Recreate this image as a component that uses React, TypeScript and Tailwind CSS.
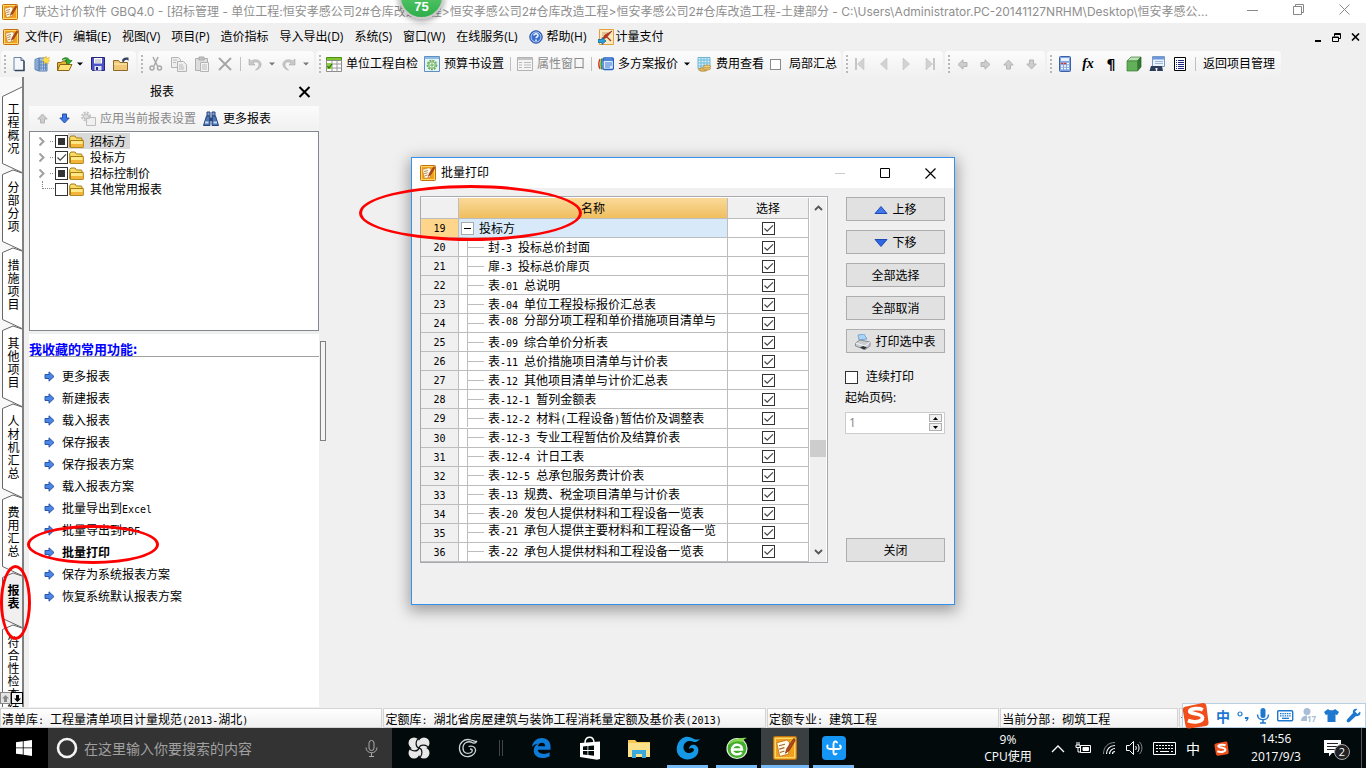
import { useState } from 'react';
import type { ReactNode } from 'react';

const UI_FONT = "[font-family:'Open_Sans','Noto_Sans_CJK_SC',sans-serif]";
const SONG_FONT = "[font-family:'Noto_Sans_CJK_SC',sans-serif]";

interface ReportRow {
  no: number;
  name: string;
  wrapped?: boolean;
}

const reportRows: ReportRow[] = [
  { no: 20, name: '封-3 投标总价封面' },
  { no: 21, name: '扉-3 投标总价扉页' },
  { no: 22, name: '表-01 总说明' },
  { no: 23, name: '表-04 单位工程投标报价汇总表' },
  { no: 24, name: '表-08 分部分项工程和单价措施项目清单与', wrapped: true },
  { no: 25, name: '表-09 综合单价分析表' },
  { no: 26, name: '表-11 总价措施项目清单与计价表' },
  { no: 27, name: '表-12 其他项目清单与计价汇总表' },
  { no: 28, name: '表-12-1 暂列金额表' },
  { no: 29, name: '表-12-2 材料(工程设备)暂估价及调整表' },
  { no: 30, name: '表-12-3 专业工程暂估价及结算价表' },
  { no: 31, name: '表-12-4 计日工表' },
  { no: 32, name: '表-12-5 总承包服务费计价表' },
  { no: 33, name: '表-13 规费、税金项目清单与计价表' },
  { no: 34, name: '表-20 发包人提供材料和工程设备一览表' },
  { no: 35, name: '表-21 承包人提供主要材料和工程设备一览', wrapped: true },
  { no: 36, name: '表-22 承包人提供材料和工程设备一览表' },
];

const favorites = [
  '更多报表',
  '新建报表',
  '载入报表',
  '保存报表',
  '保存报表方案',
  '载入报表方案',
  '批量导出到Excel',
  '批量导出到PDF',
  '批量打印',
  '保存为系统报表方案',
  '恢复系统默认报表方案',
];

const sideTabs = ['工程概况', '分部分项', '措施项目', '其他项目', '人材机汇总', '费用汇总', '报表', '符合性检查结果'];

const menus = ['文件(F)', '编辑(E)', '视图(V)', '项目(P)', '造价指标', '导入导出(D)', '系统(S)', '窗口(W)', '在线服务(L)'];

// Chinese at 12px with the latin runs in a half-width monospace
const Song = ({ text }: { text: string }) => (
  <span className={`${SONG_FONT} text-[12px] whitespace-pre`}>
    {text.split(/([\x20-\x7e]+)/).map((part, i) =>
      i % 2 ? (
        <span key={i} className="text-[10px] [font-family:'DejaVu_Sans_Mono',monospace]">{part}</span>
      ) : (
        part
      )
    )}
  </span>
);

/* ---------- icons ---------- */

const AppIcon = ({ size = 16 }: { size?: number }) => (
  <svg width={size} height={size} viewBox="0 0 16 16" className="shrink-0">
    <rect x=".5" y=".5" width="15" height="15" rx="1" fill="#f0a01c" stroke="#c4700a" />
    <rect x="1.5" y="1.5" width="13" height="13" fill="none" stroke="#ffd968" />
    <path d="M2.500 4.500 9 2.800l2 1.200-.6 8L4.500 13.600z" fill="#fffbe8" stroke="#b5651d" strokeWidth=".5" />
    <path d="M4 6.500l4-1M4.200 8.700l3.400-1M4.600 11l3-1" stroke="#a4672c" strokeWidth=".8" />
    <path d="M14 1.500 9.300 8.300l-1 3.200 2.600-2L14.800 3z" fill="#b5481c" stroke="#7a2c0c" strokeWidth=".5" />
  </svg>
);

const Caret = ({ dim }: { dim?: boolean }) => (
  <svg width="6" height="4" viewBox="0 0 6 4" className="shrink-0">
    <path d="M0 .5h6L3 3.5z" fill={dim ? '#777' : '#000'} />
  </svg>
);

const Icon = ({ children }: { children: ReactNode }) => (
  <svg width="16" height="16" viewBox="0 0 16 16" fill="none" className="shrink-0">{children}</svg>
);

const NewFile = () => (
  <Icon>
    <path d="M3 1.500h7l3 3v10H3z" fill="#f4f8fc" stroke="#6d83a3" />
    <path d="M10 1.500v3h3" stroke="#4a5f7c" />
    <path d="M13 5v9.500H4" stroke="#33455e" strokeWidth="1.400" />
  </Icon>
);

const NewProject = () => (
  <Icon>
    <path d="M1 3.500l4-1.500v13l-4-1.500zM5 2h8v13H5z" fill="#a9c9ee" stroke="#5a7fb0" />
    <path d="M7 4v10M9.500 4v10M11.500 6v8M5 6h8M5 9h8M5 12h8M3 4v10" stroke="#4f74a8" strokeWidth=".7" />
    <path d="M12 0l1 2.400L15.600 1l-1 2.400L16 5l-2 .6.4 2.400L12 6.600 9.800 8l.6-2.600L8 4.600l2-1.200L9.400 1l2 1z" fill="#ffe14a" stroke="#e0a61a" strokeWidth=".4" />
  </Icon>
);

const OpenIcon = () => (
  <Icon>
    <path d="M.5 14.500v-8h4l1-1.500h4v3" fill="#e3b534" stroke="#8a6410" />
    <path d="M.5 14.500 3 8.500h12l-3 6z" fill="#ffe27a" stroke="#8a6410" />
    <path d="M5 3.500C8 .5 12 1.500 12.500 4.500H15l-3.600 4-3.400-4h2C9.500 3 7.500 2.500 5 3.500z" fill="#2fae2b" stroke="#12700f" strokeWidth=".7" />
  </Icon>
);

const SaveIcon = () => (
  <Icon>
    <path d="M1.500 1.500h13v13h-12l-1-1z" fill="#4b52c4" stroke="#23277c" />
    <path d="M4 2h8v5.500H4z" fill="#fff" />
    <path d="M5 4h6M5 6h6" stroke="#a9a9b4" />
    <path d="M4.500 10h7v4.500h-7z" fill="#dfe2f2" />
    <path d="M6 11h2v3H6z" fill="#23277c" />
  </Icon>
);

const FolderOut = () => (
  <Icon>
    <path d="M.5 14.500v-10h5l1.500 2h7.500v8z" fill="#f0c878" stroke="#8a6a28" />
    <path d="M1 8h13" stroke="#fff0b8" />
    <path d="M9 5.500c0-3 2-4 4-4h2.500v3.500l-1.300-1.300C12 3.500 11 4.500 11 6z" fill="#31415e" />
  </Icon>
);

const Folder = () => (
  <svg width="15" height="13" viewBox="0 0 15 13" fill="none" className="shrink-0">
    <path d="M.7 12V2.500L2 1h4l1.500 2h5L13 4v8z" fill="#f8dc6a" stroke="#a87a0c" />
    <path d="M1.500 12.300V5.500h12.800v6.800z" fill="#ffe987" stroke="#a87a0c" />
    <path d="M2 9h12v3H2z" fill="#f3b43a" />
  </svg>
);

const CutIcon = () => (
  <Icon>
    <path d="M5 1l4.500 9M10 1 6 10" stroke="#a8a8a8" strokeWidth="1.500" />
    <circle cx="4" cy="12" r="2" stroke="#a8a8a8" strokeWidth="1.500" />
    <circle cx="11.500" cy="12" r="2" stroke="#a8a8a8" strokeWidth="1.500" />
  </Icon>
);

const CopyIcon = () => (
  <Icon>
    <path d="M.5 1.500h7l2 2v8h-9z" fill="#eee" stroke="#b4b4b4" />
    <path d="M6.500 5.500h6l3 3v7h-9z" fill="#eee" stroke="#b4b4b4" />
    <path d="M2 4h4M2 6.500h3M8 9h4M8 11h5M8 13h5" stroke="#bbb" />
  </Icon>
);

const PasteIcon = () => (
  <Icon>
    <path d="M1.500 2.500h12v12h-12z" fill="#ddd" stroke="#b0b0b0" />
    <path d="M5 1h5v3H5z" fill="#c4c4c4" stroke="#aaa" />
    <path d="M6.500 6.500h8v9h-8z" fill="#f2f2f2" stroke="#b4b4b4" />
    <path d="M8 9h5M8 11h5M8 13h5" stroke="#bbb" />
  </Icon>
);

const DeleteIcon = () => (
  <Icon>
    <path d="M2 2l12 12M14 2 2 14" stroke="#a4a4a4" strokeWidth="1.800" />
  </Icon>
);

const UndoIcon = ({ flip }: { flip?: boolean }) => (
  <svg width="14" height="14" viewBox="0 0 14 14" fill="none" className={flip ? 'shrink-0 -scale-x-100' : 'shrink-0'}>
    <path d="M1 2v6h6L5 6c3-2 6-1 6 1.500S9 12 7.500 13C12 12 13.500 9 13 6.500 12.500 3 7 1.500 3.200 4z" fill="#c9c9c9" stroke="#aaa" strokeWidth=".6" />
  </svg>
);

const CheckTable = () => (
  <Icon>
    <path d="M.5 1.500h15v3H.5z" fill="#7fc52e" stroke="#4e8f12" />
    <path d="M.5 4.500h15v11H.5z" fill="#fff" stroke="#8c8c8c" />
    <path d="M.5 8h15M.5 12h15M6 4.500v11M11 4.500v11" stroke="#999" />
    <path d="M1 7h5v6H1z" fill="#8ed13f" />
    <path d="M1.500 10l1.500 2 3-4" stroke="#276b0b" strokeWidth="1.200" />
  </Icon>
);

const BudgetIcon = () => (
  <Icon>
    <path d="M.5 .5h15v15H.5z" fill="#e6f1fb" stroke="#5d8fbf" />
    <path d="M1 1h14v2H1z" fill="#8fbbe4" />
    <circle cx="8" cy="9" r="4.500" stroke="#5fae4d" strokeWidth="1.600" strokeDasharray="2 1" />
    <circle cx="8" cy="9" r="3.300" fill="#fff" stroke="#5fae4d" />
    <path d="M8 6.500v5M5.500 9h5" stroke="#5fae4d" />
  </Icon>
);

const PropsIcon = () => (
  <Icon>
    <path d="M.5 1.500h15v13H.5z" fill="#f4f4f4" stroke="#b3b3b3" />
    <path d="M1 3h14" stroke="#c4c4c4" strokeWidth="2" />
    <path d="M2 6.500h3M2 9h3M2 11.500h3M7 6.500h7M7 9h7M7 11.500h7" stroke="#bbb" />
  </Icon>
);

const PlansIcon = () => (
  <Icon>
    <path d="M2 3C.6 6 .6 10 2 13" stroke="#d8341f" strokeWidth="1.500" />
    <path d="M4 2.500C2.800 6 2.800 10 4 13.500" stroke="#2f9d2f" strokeWidth="1.500" />
    <rect x="5" y="2" width="10.500" height="11.500" rx="1.500" fill="#dcebff" stroke="#2463c5" strokeWidth="1.300" />
    <path d="M5 4h10" stroke="#2463c5" strokeWidth="1.500" />
    <path d="M7 7h7M7 9h7M7 11h5" stroke="#3c77cf" />
  </Icon>
);

const FeeIcon = () => (
  <Icon>
    <path d="M2 1.500h12v11H2z" fill="#d6f0fb" stroke="#6fb3cd" />
    <path d="M2 4h12M2 7h12M2 10h12M5 1.500v11M8 1.500v11M11 1.500v11" stroke="#6fb9d8" />
    <ellipse cx="7" cy="13.500" rx="4.500" ry="1.800" fill="#e0b45c" stroke="#a37a2a" strokeWidth=".6" />
    <ellipse cx="11" cy="12.500" rx="3.600" ry="1.500" fill="#efca7c" stroke="#a37a2a" strokeWidth=".6" />
    <ellipse cx="11" cy="10.500" rx="3.600" ry="1.500" fill="#efca7c" stroke="#a37a2a" strokeWidth=".6" />
  </Icon>
);

const NavArrow = ({ bar, flip }: { bar?: boolean; flip?: boolean }) => (
  <svg width="11" height="12" viewBox="0 0 11 12" className={flip ? 'shrink-0 -scale-x-100' : 'shrink-0'}>
    <path d="M9 0v12L2.500 6z" fill="#d2d2d2" stroke="#bcbcbc" strokeWidth=".5" />
    {bar && <path d="M0 0h2v12H0z" fill="#c6c6c6" />}
  </svg>
);

// turn is one of the tailwind rotate classes
const BlockArrow = ({ fill = '#cdcdcd', edge = '#b4b4b4', turn = '' }: { fill?: string; edge?: string; turn?: string }) => (
  <svg width="11" height="11" viewBox="0 0 11 11" className={`shrink-0 ${turn}`}>
    <path d="M1 3.500h4V.8l5 4.700-5 4.700V7.500H1z" fill={fill} stroke={edge} />
  </svg>
);

const CalcIcon = () => (
  <Icon>
    <rect x="2.500" y=".5" width="11" height="15" rx="1" fill="#7fa6e0" stroke="#3a5fa4" />
    <path d="M4 2h8v3H4z" fill="#e6f0ff" />
    <path d="M4 7.500h8M4 10h8M4 12.500h8" stroke="#fff" strokeWidth="1.600" strokeDasharray="2 1" />
    <path d="M4 7.500h2M7 7.500h2" stroke="#d8341f" strokeWidth="1.600" />
  </Icon>
);

const CubeIcon = () => (
  <Icon>
    <path d="M1 5l4-4h10l-3.500 4z" fill="#b9e0b4" stroke="#3d7c36" strokeWidth=".7" />
    <path d="M11.500 5 15 1v10l-3.500 4z" fill="#2f7a2c" stroke="#245f20" strokeWidth=".7" />
    <path d="M1 5h10.500v10H1z" fill="#62b058" stroke="#3d7c36" strokeWidth=".7" />
  </Icon>
);

const FindWindow = () => (
  <Icon>
    <path d="M3.500 .5h12v10h-12z" fill="#e9f2fd" stroke="#7b98c4" />
    <path d="M4 1h11v2.500H4z" fill="#6c99dd" />
    <path d="M6 5.500h8M6 7.500h8" stroke="#9fb7d8" />
    <path d="M2 10h4l1 5H.5zM9 10h4l1 5H8z" fill="#2d3d59" />
    <path d="M5 11h5" stroke="#2d3d59" strokeWidth="2" />
  </Icon>
);

const ListIcon = () => (
  <Icon>
    <path d="M2.500 1.500h11v13h-11z" fill="#fff" stroke="#000" />
    <path d="M4 4.500h1M6 4.500h6M4 6.500h1M6 6.500h6M4 8.500h1M6 8.500h6M4 10.500h1M6 10.500h6M4 12.500h1M6 12.500h6" stroke="#1a237e" />
  </Icon>
);

const Binoculars = () => (
  <Icon>
    <path d="M4 1h3v4H4zM9 1h3v4H9z" fill="#7f9fd2" stroke="#27457d" />
    <path d="M3.500 5h3.500v9.500H.5zM9 5h3.500l3 9.500H9z" fill="#4d74b3" stroke="#27457d" />
    <path d="M6.500 6.500h3v3.500h-3z" fill="#27457d" />
    <path d="M2 11.500h3.500M10.500 11.500H14" stroke="#c9dcf7" strokeWidth="2" />
  </Icon>
);

const ApplyIcon = () => (
  <Icon>
    <circle cx="6" cy="5.500" r="4" stroke="#c4c4c4" strokeWidth="2" strokeDasharray="2 1.200" />
    <circle cx="6" cy="5.500" r="2.500" fill="#ddd" stroke="#bbb" />
    <path d="M6.500 7.500h3l1-1h5v8h-9z" fill="#f0f0f0" stroke="#bdbdbd" />
  </Icon>
);

const HelpIcon = () => (
  <svg width="14" height="14" viewBox="0 0 14 14" fill="none" className="shrink-0">
    <circle cx="7" cy="7" r="6.200" fill="#3a6fd0" stroke="#1c469c" />
    <circle cx="7" cy="7" r="5" stroke="#dbe7fb" strokeWidth=".8" />
    <path d="M5 5.500C5 3.200 9.200 3.200 9 5.600c-.1 1.200-2 1.300-2 2.600M7 9.500V11" stroke="#fff" strokeWidth="1.400" />
  </svg>
);

const PayIcon = () => (
  <Icon>
    <path d="M1.500 .5h14v15h-14z" fill="#fce9c4" stroke="#e2a13a" />
    <path d="M4 4h6M4 6h4" stroke="#c9a06a" />
    <path d="M14 2 8 9l-4 1 3-4z" fill="#c8321c" stroke="#7f1c0c" strokeWidth=".6" />
    <path d="M9 8l4 4" stroke="#a5401c" strokeWidth="1.500" />
    <path d="M0 10.500h4V8.500l4 3.500-4 3.500v-2H0z" fill="#2aa0dc" stroke="#11608f" strokeWidth=".7" />
  </Icon>
);

const PrinterIcon = () => (
  <Icon>
    <path d="M4 6 3 1l6-1 3 5z" fill="#a9d3f7" stroke="#5f93c6" strokeWidth=".7" />
    <path d="M.5 9 5 6l10 2v4l-5 3.500L.5 12z" fill="#c9ccd0" stroke="#75797e" strokeWidth=".8" />
    <path d="M.5 9l9.500 3 5-4" stroke="#f4f4f4" />
    <path d="M5 13.500l3-1.500 4 1.500-3 2z" fill="#2f3338" />
  </Icon>
);

const SogouIcon = ({ size }: { size: number }) => (
  <svg width={size} height={size} viewBox="0 0 26 26" fill="none" className="shrink-0">
    <path d="M3 4.500 20 1q3-.5 3.500 2.500l2 16q.3 3-2.500 3.500L7 25.500q-3 .3-3.600-2.500L.8 8q-.4-3 2.200-3.500z" fill="#f04e1b" />
    <path d="M20 7.500c-3-1.700-12-1.500-12.500 1.300C7 12 19.500 10.500 19.700 15c.2 4.300-9 5-14 2.800" stroke="#fff" strokeWidth="3.600" />
  </svg>
);

/* ---------- small controls ---------- */

const CheckBox = ({ label, checked = false, partial = false }: { label: string; checked?: boolean; partial?: boolean }) => {
  const [on, setOn] = useState(checked);
  return (
    <span className="relative block h-[13px] w-[13px] shrink-0">
      <input
        type="checkbox"
        aria-label={label}
        checked={on}
        onChange={() => setOn(!on)}
        className="block h-[13px] w-[13px] appearance-none border border-[#333] bg-white"
      />
      {partial ? (
        <span className="pointer-events-none absolute inset-[3px] bg-[#333]" />
      ) : (
        on && (
          <svg viewBox="0 0 13 13" fill="none" className="pointer-events-none absolute inset-0">
            <path d="M2.500 6.500 5.200 9.200 11 3.400" stroke="#444" strokeWidth="1.200" />
          </svg>
        )
      )}
    </span>
  );
};

const Grip = () => (
  <span className="flex shrink-0 flex-col gap-[2px] px-[3px]">
    {[0, 1, 2, 3, 4].map((i) => (
      <span key={i} className="block h-[2px] w-[2px] bg-[#b8b8b8]" />
    ))}
  </span>
);

const Divider = () => <span className="h-[14px] w-px shrink-0 bg-[#c0c0c0]" />;

const ToolGroup = ({ className, children }: { className: string; children: ReactNode }) => (
  <div className={`flex h-[26px] shrink-0 items-center rounded-sm bg-linear-to-b from-[#fcfcfc] to-[#f0f0f0] ${className}`}>
    <Grip />
    {children}
  </div>
);

const Tool = ({ icon, label, text, dim }: { icon?: ReactNode; label?: string; text?: string; dim?: boolean }) => (
  <button
    type="button"
    aria-label={label}
    className={`flex shrink-0 items-center gap-1 whitespace-nowrap ${dim ? 'text-[#8a8a8a]' : 'text-black'}`}
  >
    {icon}
    {text}
  </button>
);

/* ---------- window parts ---------- */

const TitleBar = () => (
  <header className="flex h-[23px] shrink-0 items-center bg-white pr-3 pl-[2px] text-[#8f8f8f]">
    <AppIcon />
    <h1 className="ml-[5px] flex-1 truncate text-[12px] leading-[20px] [font-family:Inter,'Noto_Sans_CJK_SC',sans-serif]">
      广联达计价软件 GBQ4.0 - [招标管理 - 单位工程:恒安孝感公司2#仓库改造工程&gt;恒安孝感公司2#仓库改造工程&gt;恒安孝感公司2#仓库改造工程-土建部分 - C:\Users\Administrator.PC-20141127NRHM\Desktop\恒安孝感公...
    </h1>
    <div className="flex shrink-0 items-center gap-[35px] pr-1 pb-1">
      <button type="button" aria-label="最小化">
        <svg width="11" height="11" viewBox="0 0 11 11"><path d="M0 6.500h11" stroke="#888" /></svg>
      </button>
      <button type="button" aria-label="还原">
        <svg width="11" height="11" viewBox="0 0 11 11" fill="none" stroke="#888"><path d="M.5 2.500h8v8h-8zM2.500 2.500v-2h8v8h-2" /></svg>
      </button>
      <button type="button" aria-label="关闭窗口">
        <svg width="11" height="11" viewBox="0 0 11 11" stroke="#888"><path d="M.5 .5l10 10M10.500 .5l-10 10" /></svg>
      </button>
    </div>
  </header>
);

const MenuBar = () => (
  <nav className="flex h-[28px] shrink-0 items-center pr-[6px] pl-[3px] text-[12px] whitespace-nowrap">
    <AppIcon />
    <div className="ml-[6px] flex items-center gap-[11px]">
      {menus.map((m) => (
        <button key={m} type="button">{m}</button>
      ))}
      <button type="button" className="flex items-center gap-1"><HelpIcon />帮助(H)</button>
      <button type="button" className="flex items-center gap-[2px]"><PayIcon />计量支付</button>
    </div>
    <div className="ml-auto flex items-center gap-[10px]">
      <button type="button" aria-label="最小化文档">
        <svg width="8" height="9" viewBox="0 0 8 9"><path d="M1 7h6v2H1z" /></svg>
      </button>
      <button type="button" aria-label="还原文档">
        <svg width="9" height="9" viewBox="0 0 9 9" fill="none" stroke="#000"><path d="M.5 4h6v4.500h-6zM.5 4.500h6M2.500 3.500v-3h6v5h-2M2.500 1.500h6" /></svg>
      </button>
      <button type="button" aria-label="关闭文档">
        <svg width="9" height="8" viewBox="0 0 9 8" stroke="#000" strokeWidth="1.600"><path d="M1 .5l7 7M8 .5l-7 7" /></svg>
      </button>
    </div>
  </nav>
);

const ToolBar = () => (
  <div className="flex h-[26px] shrink-0 gap-[2px] overflow-hidden pl-px text-[12px]">
    <ToolGroup className="w-[135px]">
      <div className="ml-[2px] flex items-center gap-[7px]">
        <Tool label="新建" icon={<NewFile />} />
        <Tool label="新建项目" icon={<NewProject />} />
        <Tool label="打开" icon={<><OpenIcon /><Caret /></>} />
        <Tool label="保存" icon={<SaveIcon />} />
        <Tool label="关闭项目" icon={<FolderOut />} />
      </div>
    </ToolGroup>
    <ToolGroup className="w-[176px]">
      <div className="ml-[2px] flex items-center gap-[7px]">
        <Tool label="剪切" icon={<CutIcon />} />
        <Tool label="复制" icon={<CopyIcon />} />
        <Tool label="粘贴" icon={<PasteIcon />} />
        <Tool label="删除" icon={<DeleteIcon />} />
        <Divider />
        <Tool label="撤销" icon={<UndoIcon />} />
        <Caret dim />
        <Tool label="重做" icon={<UndoIcon flip />} />
        <Caret dim />
      </div>
    </ToolGroup>
    <ToolGroup className="w-[525px]">
      <div className="ml-[2px] flex items-center gap-[6px]">
        <Tool icon={<CheckTable />} text="单位工程自检" />
        <Tool icon={<BudgetIcon />} text="预算书设置" />
        <Divider />
        <Tool icon={<PropsIcon />} text="属性窗口" dim />
        <Divider />
        <Tool icon={<PlansIcon />} text="多方案报价" />
        <Caret />
        <Tool icon={<FeeIcon />} text="费用查看" />
        <label className="flex shrink-0 items-center gap-2 whitespace-nowrap">
          <input type="checkbox" className="h-[11px] w-[11px] appearance-none border border-[#8a8a8a] bg-white" />
          局部汇总
        </label>
      </div>
    </ToolGroup>
    <ToolGroup className="w-[100px]">
      <div className="ml-1 flex items-center gap-3">
        <Tool label="第一条" icon={<NavArrow bar />} />
        <Tool label="上一条" icon={<NavArrow />} />
        <Tool label="下一条" icon={<NavArrow flip />} />
        <Tool label="最后一条" icon={<NavArrow bar flip />} />
      </div>
    </ToolGroup>
    <ToolGroup className="w-[100px]">
      <div className="ml-1 flex items-center gap-3">
        <Tool label="左移" icon={<BlockArrow turn="rotate-180" />} />
        <Tool label="右移" icon={<BlockArrow />} />
        <Tool label="上移一行" icon={<BlockArrow turn="-rotate-90" />} />
        <Tool label="下移一行" icon={<BlockArrow turn="rotate-90" />} />
      </div>
    </ToolGroup>
    <ToolGroup className="w-[234px]">
      <div className="ml-[2px] flex items-center gap-[7px]">
        <Tool label="计算器" icon={<CalcIcon />} />
        <button type="button" className="w-4 text-[14px] leading-4 font-bold italic [font-family:'Liberation_Serif',serif]">fx</button>
        <button type="button" className="w-4 text-[14px] leading-4 font-bold [font-family:'DejaVu_Sans',sans-serif]">¶</button>
        <Tool label="图元" icon={<CubeIcon />} />
        <Tool label="查找" icon={<FindWindow />} />
        <Tool label="列表" icon={<ListIcon />} />
        <Divider />
        <Tool text="返回项目管理" />
      </div>
    </ToolGroup>
  </div>
);

const SideTabs = () => (
  <div className="flex w-6 shrink-0 flex-col overflow-hidden border-r-2 border-[#808080] bg-[#f8f8f8] pt-[19px]" role="tablist">
    {sideTabs.map((tab) => {
      const h = tab.length * 13 + 26;
      const active = tab === '报表';
      const top = tab === '工程概况' ? 'M22 -9' : 'M22 -1 L13 -4';
      return (
        <button
          key={tab}
          type="button"
          role="tab"
          aria-selected={active}
          className="relative flex shrink-0 justify-center pt-[6px] pb-5 pl-[5px]"
        >
          <svg width="22" height={h} viewBox={`0 0 22 ${h}`} className="absolute top-0 left-0 overflow-visible">
            <path
              d={`${top} L2.500 .5 V${h - 10.5} L22 ${h - 1.5}`}
              fill={active ? '#f0f0f0' : '#fff'}
              stroke="#666"
            />
          </svg>
          <span className={`relative w-[13px] text-[12px] leading-[13px] break-all ${SONG_FONT} ${active ? 'font-bold' : ''}`}>{tab}</span>
        </button>
      );
    })}
  </div>
);

const TreeRow = ({ text, state, selected, leaf }: { text: string; state: 'on' | 'off' | 'partial'; selected?: boolean; leaf?: boolean }) => (
  <li className="flex h-4 items-center pl-2">
    {leaf ? (
      <span className="mr-px mb-2 ml-1 h-2 w-3 border-b border-l border-dotted border-[#888]" />
    ) : (
      <>
        <svg width="7" height="9" viewBox="0 0 7 9" fill="none"><path d="M1.500 .5 5.500 4.500l-4 4" stroke="#a0a0a0" strokeWidth="2" /></svg>
        <span className="mr-[2px] ml-[5px] w-[3px] border-b border-dotted border-[#888]" />
      </>
    )}
    <CheckBox label={text} checked={state === 'on'} partial={state === 'partial'} />
    <span className={`flex h-4 items-center gap-[6px] pr-1 pl-px ${selected ? 'bg-[#d9d9d9]' : ''}`}>
      <Folder />
      <Song text={text} />
    </span>
  </li>
);

const ReportPanel = () => (
  <section className="ml-[5px] flex w-[290px] shrink-0 flex-col">
    <div className="flex h-[29px] items-center justify-between pr-2 pl-[121px]">
      <h2 className="text-[12px]">报表</h2>
      <button type="button" aria-label="关闭报表面板">
        <svg width="13" height="12" viewBox="0 0 13 12" stroke="#000" strokeWidth="2"><path d="M1.500 1l10 10M11.500 1l-10 10" /></svg>
      </button>
    </div>
    <div className="flex h-[25px] items-center bg-linear-to-b from-[#fbfbfb] to-[#f1f1f1] pl-2 text-[12px]">
      <Tool label="上移报表" icon={<BlockArrow turn="-rotate-90" />} />
      <span className="ml-[11px] flex">
        <Tool label="下移报表" icon={<BlockArrow turn="rotate-90" fill="#3f79e6" edge="#2350b0" />} />
      </span>
      <span className="ml-[10px] flex gap-[7px]">
        <Tool icon={<ApplyIcon />} text="应用当前报表设置" dim />
        <Tool icon={<Binoculars />} text="更多报表" />
      </span>
    </div>
    <ul className="h-[200px] border border-[#828790] bg-white pt-px">
      <TreeRow text="招标方" state="partial" selected />
      <TreeRow text="投标方" state="on" />
      <TreeRow text="招标控制价" state="partial" />
      <TreeRow text="其他常用报表" state="off" leaf />
    </ul>
    <div className="mt-[3px] flex-1 bg-white pt-2">
      <h3 className={`border-b border-[#a0a0a0] text-[13px] leading-[14px] font-bold text-[#0000ff] ${SONG_FONT}`}>我收藏的常用功能:</h3>
      <ul className="pt-2">
        {favorites.map((f) => (
          <li key={f} className="flex h-[22px] items-center">
            <a href="#" className={`flex items-center gap-[7px] pl-[15px] ${f === '批量打印' ? 'font-bold' : ''}`}>
              <BlockArrow fill="#4a86e8" edge="#2a55a8" />
              <Song text={f} />
            </a>
          </li>
        ))}
      </ul>
    </div>
  </section>
);

const SideButton = ({ children }: { children: ReactNode }) => (
  <button type="button" className="flex h-6 w-full items-center justify-center gap-1 border border-[#adadad] bg-[#e1e1e1] pt-px text-[12px] leading-4">
    {children}
  </button>
);

const PrintTable = () => (
  <table className={`min-w-0 flex-1 table-fixed border-separate border-spacing-0 text-[12px] leading-4 ${SONG_FONT}`}>
    <colgroup>
      <col className="w-[38px]" />
      <col />
      <col className="w-[81px]" />
    </colgroup>
    <thead>
      <tr className="h-[21px]">
        <th className="border-r border-b border-[#bdbdbd] bg-[#f0f0f0] p-0" aria-label="序号" />
        <th className="border-r border-b border-[#bdbdbd] bg-linear-to-b from-[#fad999] to-[#f0bf5d] p-0 font-normal">名称</th>
        <th className="border-r border-b border-[#bdbdbd] bg-[#f0f0f0] p-0 font-normal">选择</th>
      </tr>
    </thead>
    <tbody>
      <tr className="h-[19px]">
        <th className="border-r border-b border-[#bdbdbd] bg-[#ffd58c] p-0 font-normal"><Song text="19" /></th>
        <td className="border-r border-b border-[#bdbdbd] bg-[#d8eaf9] p-0">
          <div className="flex h-[18px] items-center gap-[5px] pl-[2px]">
            <button type="button" aria-label="折叠投标方" className="flex h-[13px] w-[13px] items-center justify-center border border-[#aaa] bg-white">
              <span className="h-px w-[7px] bg-black" />
            </button>
            投标方
          </div>
        </td>
        <td className="border-r border-b border-[#bdbdbd] bg-white p-0">
          <div className="flex justify-center"><CheckBox label="投标方" checked /></div>
        </td>
      </tr>
      {reportRows.map((row) => (
        <tr key={row.no} className="h-[19px]">
          <th className="border-r border-b border-[#bdbdbd] bg-[#f0f0f0] p-0 font-normal"><Song text={String(row.no)} /></th>
          <td className="border-r border-b border-[#bdbdbd] bg-white p-0">
            <div className="ml-2 flex h-[18px] items-center border-l border-[#bdbdbd]">
              <span className="mr-1 h-px w-4 bg-[#bdbdbd]" />
              <span className={`overflow-hidden leading-4 ${row.wrapped ? 'pb-1' : 'pt-px'}`}><Song text={row.name} /></span>
            </div>
          </td>
          <td className="border-r border-b border-[#bdbdbd] bg-white p-0">
            <div className="flex justify-center"><CheckBox label={row.name} checked /></div>
          </td>
        </tr>
      ))}
    </tbody>
  </table>
);

const PrintDialog = () => (
  <div role="dialog" aria-label="批量打印" className="absolute top-[157px] left-[411px] flex h-[448px] w-[544px] flex-col border border-[#3492ea] bg-[#f0f0f0] shadow-[0_4px_14px_2px_rgba(0,0,0,0.35)]">
    <div className="flex h-[30px] shrink-0 items-center bg-white pr-[18px] pl-2">
      <AppIcon />
      <h2 className="ml-[5px] text-[12px]">批量打印</h2>
      <div className="ml-auto flex items-center gap-[35px]">
        <button type="button" aria-label="最小化对话框"><svg width="10" height="10"><path d="M0 5.500h10" stroke="#ccc" /></svg></button>
        <button type="button" aria-label="最大化对话框"><svg width="10" height="10" fill="none"><path d="M.5 .5h9v9h-9z" stroke="#000" /></svg></button>
        <button type="button" aria-label="关闭对话框"><svg width="11" height="11" stroke="#000" strokeWidth="1.200"><path d="M.5 .5l10 10M10.500 .5l-10 10" /></svg></button>
      </div>
    </div>
    <div className="flex flex-1 gap-[17px] pt-2 pr-[9px] pl-2">
      <div className="flex h-[367px] flex-1 border border-[#a9a9b0] bg-white pt-px">
        <PrintTable />
        <div className="mx-px flex w-4 shrink-0 flex-col items-center bg-[#f0f0f0] py-[7px]">
          <svg width="9" height="6" fill="none"><path d="M1 5l3.500-3.500L8 5" stroke="#555" strokeWidth="1.800" /></svg>
          <span className="mt-[229px] h-[17px] w-full bg-[#cdcdcd]" />
          <svg width="9" height="6" fill="none" className="mt-auto"><path d="M1 1l3.500 3.500L8 1" stroke="#555" strokeWidth="1.800" /></svg>
        </div>
      </div>
      <div className="flex w-[100px] shrink-0 flex-col pt-px">
        <div className="flex flex-col gap-[9px] pl-px">
          <SideButton>
            <svg width="14" height="8"><path d="M1 7.500 7 .5l6 7z" fill="#3f78ee" stroke="#1f4bb0" /></svg>上移
          </SideButton>
          <SideButton>
            <svg width="14" height="8"><path d="M1 .5h12l-6 7z" fill="#2f66e2" stroke="#1f4bb0" /></svg>下移
          </SideButton>
          <SideButton>全部选择</SideButton>
          <SideButton>全部取消</SideButton>
          <SideButton><PrinterIcon />打印选中表</SideButton>
        </div>
        <label className="mt-4 flex items-center gap-2 text-[12px] leading-4">
          <CheckBox label="连续打印" />
          连续打印
        </label>
        <label htmlFor="start-page" className="mt-[5px] text-[12px] leading-4">起始页码:</label>
        <div className="mt-[6px] flex h-[22px] border border-[#ccc] bg-white pr-[2px]">
          <input id="start-page" disabled defaultValue="1" className="w-full min-w-0 pl-[3px] text-[12px] text-[#838383]" />
          <div className="flex shrink-0 flex-col gap-px py-px">
            <button type="button" aria-label="增加" className="flex h-[8px] w-[13px] items-center justify-center border border-[#b0b0b0] bg-[#f0f0f0]">
              <svg width="5" height="3"><path d="M0 3h5L2.500 0z" /></svg>
            </button>
            <button type="button" aria-label="减少" className="flex h-[8px] w-[13px] items-center justify-center border border-[#b0b0b0] bg-[#f0f0f0]">
              <svg width="5" height="3"><path d="M0 0h5L2.500 3z" /></svg>
            </button>
          </div>
        </div>
        <div className="mt-auto mb-[42px] pl-px"><SideButton>关闭</SideButton></div>
      </div>
    </div>
  </div>
);

const StatusCell = ({ className, text }: { className: string; text: string }) => (
  <div className={`h-[20px] overflow-hidden border border-[#d4d4d4] bg-linear-to-b from-white to-[#f0f0f0] pl-px leading-[18px] ${className}`}>
    <Song text={text} />
  </div>
);

const StatusBar = () => (
  <footer className="relative flex h-[21px] shrink-0 gap-px pt-px">
    <StatusCell className="w-[28%]" text="清单库: 工程量清单项目计量规范(2013-湖北)" />
    <StatusCell className="w-[28%]" text="定额库: 湖北省房屋建筑与装饰工程消耗量定额及基价表(2013)" />
    <StatusCell className="w-[17%]" text="定额专业: 建筑工程" />
    <StatusCell className="w-[13%]" text="当前分部: 砌筑工程" />
    <StatusCell className="flex-1" text="计" />
    <div className="absolute right-0 bottom-0 flex h-[25px] items-center gap-[7px] border border-[#b9cfe6] bg-white pr-1 text-[#1e78d0]">
      <span className="-my-1 -ml-px"><SogouIcon size={27} /></span>
      <span className={`text-[14px] leading-4 font-bold ${SONG_FONT}`}>中</span>
      <svg width="12" height="14" fill="none"><circle cx="3" cy="5" r="2" stroke="currentColor" strokeWidth="1.200" /><path d="M8 8h3.500c.3 2-.8 3.500-2.500 4.500l-.5-.7c.9-.6 1.200-1.200 1.200-1.800H8z" fill="currentColor" /></svg>
      <svg width="14" height="16" fill="none"><rect x="4.500" y="0" width="5" height="10" rx="2.500" fill="currentColor" /><path d="M1.500 6.500c0 7 11 7 11 0M7 12v3.500M4 15h6" stroke="currentColor" strokeWidth="1.500" /></svg>
      <svg width="17" height="12" fill="none"><rect x=".7" y=".7" width="15" height="10" rx="1" stroke="currentColor" strokeWidth="1.400" /><path d="M3 3.700h11M3 5.900h11" stroke="currentColor" strokeWidth="1.300" strokeDasharray="1.500 .8" /><path d="M5 8.300h7" stroke="currentColor" strokeWidth="1.300" /></svg>
      <svg width="16" height="15" className="text-[#a9bdd6]"><circle cx="6" cy="3.500" r="3.500" fill="currentColor" /><path d="M0 13c0-4 3-5.500 6-5.500V13z" fill="currentColor" /><text x="6" y="14" fontSize="8" fontWeight="bold" fill="currentColor">17</text></svg>
      <svg width="15" height="13"><path d="M4 0c1 1.800 6 1.800 7 0l4 3-2 3.200-1.500-1V13h-8V5.200L2 6.200 0 3z" fill="currentColor" /></svg>
      <svg width="15" height="15"><path d="M14 3.500 11.500 6 9 3.500 11.500 1C9 0 6 2 7 5L1 11.500C0 13.500 1.500 15 3.500 14L10 8c3 1 5.500-2 4-4.500z" fill="currentColor" /></svg>
    </div>
  </footer>
);

const TaskButton = ({ label, className = '', children }: { label: string; className?: string; children: ReactNode }) => (
  <button type="button" aria-label={label} className={`flex h-10 shrink-0 items-center justify-center border-b-[3px] pt-[3px] ${className}`}>
    {children}
  </button>
);

const TaskBar = () => (
  <footer className="flex h-10 shrink-0 items-center bg-[#020a0c] text-white">
    <button type="button" aria-label="开始" className="flex h-10 w-12 shrink-0 items-center justify-center bg-black">
      <svg width="16" height="16" fill="#fff"><path d="M0 2.300 6.800 1.300V7.500H0zM7.600 1.200 16 0v7.500H7.600zM0 8.300h6.800v6.300L0 13.700zM7.600 8.300H16V16l-8.400-1.200z" /></svg>
    </button>
    <div className="flex h-10 w-[344px] shrink-0 items-center bg-[#333] pr-[14px] pl-2">
      <svg width="22" height="22" fill="none" className="shrink-0"><circle cx="11" cy="11" r="9" stroke="#f4f4f4" strokeWidth="2.600" /></svg>
      <input
        type="search"
        aria-label="搜索"
        placeholder="在这里输入你要搜索的内容"
        className="ml-[6px] min-w-0 flex-1 bg-transparent text-[14px] outline-none placeholder:text-[#a0a0a0]"
      />
      <svg width="13" height="17" fill="none" stroke="#aaa" className="shrink-0"><rect x="4" y=".5" width="5" height="10" rx="2.500" /><path d="M1 7.500c0 7 11 7 11 0M6.500 13v3.500M4 16.500h5" /></svg>
    </div>
    <TaskButton label="输入助手" className="ml-[2px] w-[49px] border-transparent">
      <svg width="22" height="22" viewBox="0 0 22 22" fill="#e8e8e8">
        <circle cx="6" cy="6" r="5.500" /><circle cx="16" cy="6" r="5.500" /><circle cx="6" cy="16" r="5.500" /><circle cx="16" cy="16" r="5.500" /><path d="M6 6h10v10H6z" />
        <path d="M11 11C7 10 7 3 12 .5M11 11c1-4 8-4 10.500 1M11 11c4 1 4 8-1 10.500M11 11c-1 4-8 4-10.500-1" stroke="#101416" strokeWidth="1.200" fill="none" />
      </svg>
    </TaskButton>
    <TaskButton label="浏览器助手" className="w-[49px] border-transparent">
      <svg width="20" height="20" viewBox="0 0 20 20" fill="none" stroke="#cfd3d4" strokeWidth="1.300"><path d="M19 3c-2 1-3 0-6-1C6 0 1 5 1.500 11S7 19 11 18.500s7-4 6.500-7c-.5-3-4-4-7-3M15 5C10 2 5 5 5 10s4 6 7 5 3-4 0-4M19 3c-1 2-2 2.500-4 2" /></svg>
    </TaskButton>
    <span className="mx-[7px] h-4 w-1 shrink-0 border-x border-[#444]" />
    <TaskButton label="Edge" className="ml-[6px] w-[49px] border-transparent">
      <svg width="20" height="22" viewBox="0 0 22 22" fill="#0f7bd8"><path d="M1 10C2 3 7 0 12 0c6 0 9.500 4 9.500 9.500V13H7.500c.2 3 3 4.500 6.500 4.500 2.500 0 4.500-.6 6.500-1.800V20c-2 1.300-5 2-8 2-6 0-9.500-3.500-9.500-8.500C3 10 5 7.500 8 6.200 5 6.200 2.500 7.500 1 10zm6.700-.8h8C15.700 7 14.500 5.300 12 5.300S8 7 7.700 9.200z" /></svg>
    </TaskButton>
    <TaskButton label="应用商店" className="w-[49px] border-transparent">
      <svg width="22" height="24" viewBox="0 0 22 24"><path d="M1 7l20-1.500V23l-3 .7L1 21z" fill="#fff" /><path d="M6 7c0-7 8-8 9-1" stroke="#fff" strokeWidth="1.500" fill="none" /><path d="M4 10.500l4.500-.4v4H4zM9.300 10l5.700-.5v4.600H9.300zM4 15h4.500v4L4 18.500zM9.300 15H15v4.800L9.300 19z" fill="#020a0c" /></svg>
    </TaskButton>
    <TaskButton label="文件资源管理器" className="w-[49px] border-transparent">
      <svg width="22" height="19" viewBox="0 0 22 19"><path d="M0 1h7l2 2h13v15H0z" fill="#f5c851" /><path d="M0 4h22v14H0z" fill="#fce08a" /><path d="M4 19v-8h14v8h-4v-4H8v4z" fill="#3aa9dc" /></svg>
    </TaskButton>
    <TaskButton label="广联达" className="mx-1 w-[41px] border-[#76b9f7]">
      <svg width="24" height="24" viewBox="0 0 24 24" fill="#1599e6"><path d="M24 3c-2 2.500-4 3-6 3-4-2-10-1-10.500 5-.3 5 5 7.500 9 5 2-1.300 2-3.500-.5-4-1-.2-2 .2-3 1 0-3 3-5 6-4 5 2 4 9 0 12-5 4-13 3-16.500-2S1 6 6 2.500c5-3.500 9-1 12 .5 2 .8 4 .6 6 0z" /></svg>
    </TaskButton>
    <TaskButton label="浏览器" className="mx-1 w-[41px] border-[#76b9f7]">
      <svg width="22" height="24" viewBox="0 0 22 24"><circle cx="11" cy="12.500" r="10" fill="#44ad2d" stroke="#dff5d8" strokeWidth="1.200" /><path d="M6.500 13.500h9.500c0-6-9.500-6.500-10 0-.3 5.500 7.500 6 9.500 2.800" stroke="#fff" strokeWidth="2.500" fill="none" /><path d="M1 10C5 4 14 1 21 2c-3 1-4 2-5 4-5-2-10 0-15 4z" fill="#8bdb4f" /></svg>
    </TaskButton>
    <TaskButton label="计价软件" className="w-12 border-[#76b9f7] bg-[#3a4042]"><AppIcon size={24} /></TaskButton>
    <TaskButton label="工具" className="mx-1 w-[41px] border-[#76b9f7]">
      <svg width="24" height="24" viewBox="0 0 24 24" fill="none"><rect width="24" height="24" rx="4" fill="#1596f4" /><path d="M15 6.500c-1.500-1.800-3.500-.8-3.500 1.500v8.500c0 2 1.800 2.500 3 1.200M5.500 9.500C4.500 12 6 13 8 13h8.500c2.500 0 3-2 1.500-3.500" stroke="#fff" strokeWidth="1.900" strokeLinecap="round" /></svg>
    </TaskButton>
    <div className="ml-auto flex h-10 shrink-0 items-center">
      <div className="w-[60px] text-center text-[12px] leading-[17px]">
        <p>9%</p>
        <p>CPU使用</p>
      </div>
      <div className="ml-[13px] flex items-center gap-[10px]">
        <svg width="14" height="9" fill="none"><path d="M1 8l6-6 6 6" stroke="#fff" strokeWidth="1.300" /></svg>
        <svg width="17" height="12" fill="none" stroke="#fff"><path d="M5.500 3.500h10v7h-10z" /><path d="M8 5.500h5.500v3H8z" fill="#fff" /><path d="M1 3h4v2.500H1zM2 3V0M4 3V0M3 6v4h2.500" /></svg>
        <svg width="14" height="14" fill="none" stroke="#fff"><path d="M1.500 13C1.500 6 6 1.500 13 1.500" stroke="#888" /><path d="M4.500 13c0-5 3.500-8.500 8.500-8.500M7.500 13c0-3 2.500-5.500 5.500-5.500M10.500 13c0-1.500 1-2.500 2.500-2.500" strokeWidth="1.200" /></svg>
        <svg width="17" height="14" fill="none" stroke="#fff"><path d="M.5 4.500h3l4-4v13l-4-4h-3z" /><path d="M9.500 5c1 1 1 3 0 4M11.500 3c2 2 2 6 0 8" /><path d="M13.500 1c3.200 3 3.200 9 0 12" stroke="#888" /></svg>
        <svg width="23" height="13" fill="none" stroke="#fff"><path d="M.5 .5h22v12H.5z" /><path d="M3 3.500h17M3 6.500h17" strokeDasharray="2 1" /><path d="M3 9.500h2M7 9.500h9M18 9.500h2" /></svg>
        <span className="text-[14px]">中</span>
        <span className="ml-1"><SogouIcon size={15} /></span>
      </div>
      <time className="ml-[13px] w-[68px] text-center text-[12px] leading-[18px] whitespace-nowrap">
        <span className="block">14:56</span>
        <span className="block">2017/9/3</span>
      </time>
      <button type="button" aria-label="通知" className="relative ml-[14px] h-[24px] w-[26px]">
        <svg width="17" height="17" className="block"><path d="M0 0h17v13H8l-3 3.500V13H0z" fill="#fff" /><path d="M3 3.500h11M3 6.500h11M3 9.500h8" stroke="#222" /></svg>
        <span className="absolute right-0 bottom-0 flex h-4 w-4 items-center justify-center rounded-full border border-[#aaa] bg-[#222] text-[11px]">2</span>
      </button>
      <span className="mr-1 ml-[11px] h-10 w-px bg-[#555]" />
    </div>
  </footer>
);

const RedRing = ({ className }: { className: string }) => (
  <span className={`pointer-events-none absolute rounded-[50%] border-[3px] border-[#ff0000] ${className}`} />
);

export default function App() {
  return (
    <div className={`relative flex h-screen flex-col overflow-hidden bg-[#f0f0f0] text-black ${UI_FONT}`}>
      <TitleBar />
      <MenuBar />
      <ToolBar />
      <main className="flex min-h-0 flex-1">
        <div className="relative flex">
          <SideTabs />
          <div className="absolute bottom-[3px] left-0 flex">
            <button type="button" aria-label="上一页签" className="flex h-3 w-[11px] items-center justify-center border border-[#888] bg-[#e4e4e4]">
              <svg width="7" height="7" fill="#888"><path d="M3.500 0 7 3.500H5V7H2V3.500H0z" /></svg>
            </button>
            <button type="button" aria-label="下一页签" className="flex h-3 w-[12px] items-center justify-center border border-black bg-[#f0f0f0]">
              <svg width="7" height="7"><path d="M3.500 7 7 3.500H5V0H2v3.500H0z" /></svg>
            </button>
          </div>
        </div>
        <ReportPanel />
        <div className="mt-[264px] ml-px h-[100px] w-[6px] shrink-0 border border-[#808080] bg-[#f4f4f4]" />
      </main>
      <StatusBar />
      <TaskBar />

      <PrintDialog />
      <div className="absolute -top-[26px] left-[399px] flex h-[45px] w-[45px] items-end justify-center rounded-full border-2 border-[#c9c9c9] bg-linear-to-b from-[#6fd97f] to-[#2cae4a] pb-[3px] text-[13px] leading-[14px] font-bold text-white shadow-[0_2px_6px_rgba(0,0,0,0.4)] [font-family:'Liberation_Sans',sans-serif]">
        75
      </div>
      <RedRing className="top-[185px] left-[359px] h-[56px] w-[223px]" />
      <RedRing className="top-[525px] left-[27px] h-[39px] w-[132px]" />
      <RedRing className="top-[565px] left-0 h-[75px] w-[31px]" />
    </div>
  );
}
